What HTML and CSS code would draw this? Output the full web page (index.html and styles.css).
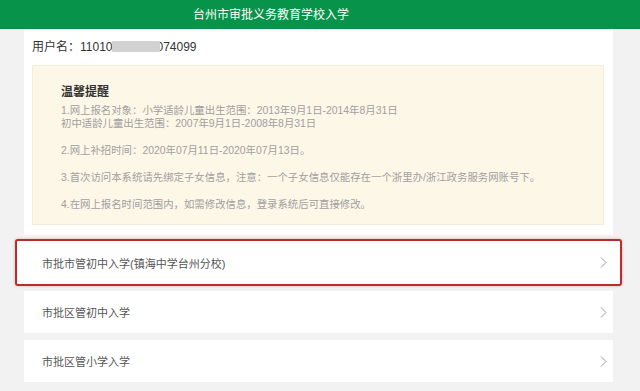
FILE: index.html
```
<!DOCTYPE html>
<html lang="zh-CN">
<head>
    <meta charset="UTF-8">
    <meta name="viewport" content="width=device-width, initial-scale=1.0">
    <title>台州市审批义务教育学校入学</title>
    <link rel="stylesheet" href="styles.css">
</head>
<body>
    <div class="header">
        <h1>台州市审批义务教育学校入学</h1>
    </div>

    <div class="main">
        <div class="panel">
            <div class="user">用户名：11010<span class="mask"></span>074099</div>

            <div class="notice">
                <h2>温馨提醒</h2>
                <p>1.网上报名对象：小学适龄儿童出生范围：2013年9月1日-2014年8月31日<br>初中适龄儿童出生范围：2007年9月1日-2008年8月31日</p>
                <p class="gap">2.网上补招时间：2020年07月11日-2020年07月13日。</p>
                <p>3.首次访问本系统请先绑定子女信息，注意：一个子女信息仅能存在一个浙里办/浙江政务服务网账号下。</p>
                <p>4.在网上报名时间范围内，如需修改信息，登录系统后可直接修改。</p>
            </div>
        </div>

        <div class="menu">
            <a class="item active" href="#">
                <span>市批市管初中入学(镇海中学台州分校)</span>
                <svg class="arrow" width="7" height="11" viewBox="0 0 7 11"><polyline points="1,0.5 6,5.5 1,10.5" fill="none" stroke="#9a9a9a" stroke-width="1"/></svg>
            </a>
            <a class="item" href="#">
                <span>市批区管初中入学</span>
                <svg class="arrow" width="7" height="11" viewBox="0 0 7 11"><polyline points="1,0.5 6,5.5 1,10.5" fill="none" stroke="#9a9a9a" stroke-width="1"/></svg>
            </a>
            <a class="item" href="#">
                <span>市批区管小学入学</span>
                <svg class="arrow" width="7" height="11" viewBox="0 0 7 11"><polyline points="1,0.5 6,5.5 1,10.5" fill="none" stroke="#9a9a9a" stroke-width="1"/></svg>
            </a>
        </div>
    </div>
</body>
</html>
```

FILE: styles.css
```
* {
    box-sizing: border-box;
    margin: 0;
    padding: 0;
}

body {
    font-family: "Liberation Sans", "Noto Sans CJK SC", sans-serif;
    background: #f2f2f2;
    color: #333;
    width: 640px;
    height: 391px;
    overflow: hidden;
}

.header {
    background: #07934a;
    height: 29px;
    display: flex;
    align-items: center;
    padding-left: 193px;
}

.header h1 {
    color: #fff;
    font-size: 12px;
    font-weight: normal;
    line-height: 16px;
}

.main {
    width: 589px;
    margin-left: 24px;
}

.panel {
    background: #fff;
    padding: 9px 9px 10px 8px;
}

.user {
    font-size: 12px;
    line-height: 18px;
    color: #333;
    padding-left: 0;
}

.mask {
    display: inline-block;
    width: 48px;
    height: 11px;
    background: #d2d2d2;
    vertical-align: -1px;
    margin-right: -4px;
    position: relative;
    border-radius: 1px;
}

.notice {
    margin-top: 9px;
    background: #fdf7e7;
    border: 1px solid #f4eddb;
    height: 160px;
    padding: 18px 20px 0 28px;
}

.notice h2 {
    font-size: 12px;
    font-weight: bold;
    line-height: 16px;
    color: #333;
    margin-bottom: 4px;
}

.notice p {
    font-size: 10.4px;
    line-height: 13px;
    color: #a0a0a0;
    margin-bottom: 14px;
}

.menu {
    display: flex;
    flex-direction: column;
    gap: 7px;
    margin-top: 7px;
}

.item {
    display: flex;
    align-items: center;
    justify-content: space-between;
    height: 42px;
    background: #fff;
    padding: 0 6px 0 18px;
    text-decoration: none;
    font-size: 11px;
    color: #555;
}

.item.active {
    height: 47px;
    margin: -3px -9px -2px -9px;
    border: 2px solid #b82d2d;
    border-radius: 3px;
    box-shadow: 0 0 3px rgba(184, 45, 45, 0.35);
    padding: 0 13px 0 25px;
}

.arrow {
    display: block;
}
```
